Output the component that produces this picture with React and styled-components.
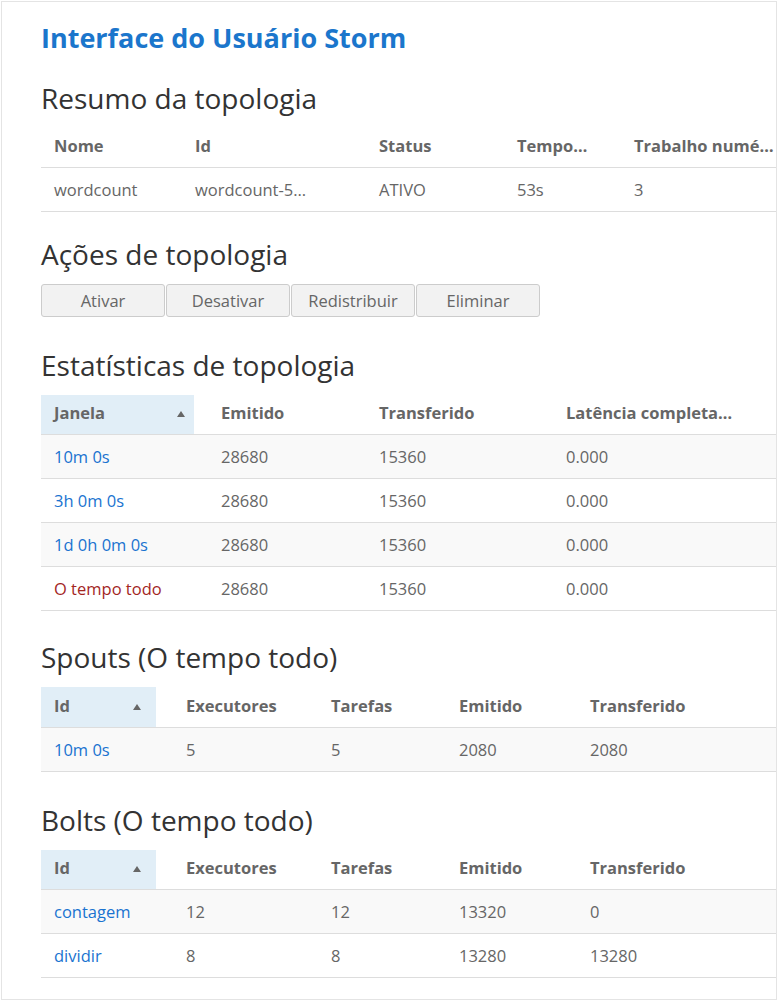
import React from "react";
import styled, { createGlobalStyle } from "styled-components";

const GlobalStyle = createGlobalStyle`
  body {
    margin: 0;
    background: #ffffff;
    font-family: "Open Sans", "Noto Sans", sans-serif;
  }
`;

const SUMMARY = {
  cols: [141, 184, 138, 117, null],
  head: ["Nome", "Id", "Status", "Tempo…", "Trabalho numé…"],
  rows: [["wordcount", "wordcount-5…", "ATIVO", "53s", "3"]],
};

const STATS = [
  { win: "10m 0s", emitted: "28680", transferred: "15360", latency: "0.000" },
  { win: "3h 0m 0s", emitted: "28680", transferred: "15360", latency: "0.000" },
  { win: "1d 0h 0m 0s", emitted: "28680", transferred: "15360", latency: "0.000" },
  { win: "O tempo todo", emitted: "28680", transferred: "15360", latency: "0.000", all: true },
];

const SPOUTS = [{ id: "10m 0s", executors: 5, tasks: 5, emitted: 2080, transferred: 2080 }];

const BOLTS = [
  { id: "contagem", executors: 12, tasks: 12, emitted: 13320, transferred: 0 },
  { id: "dividir", executors: 8, tasks: 8, emitted: 13280, transferred: 13280 },
];

const COMPONENT_COLS = [115, 145, 128, 131, null];

export default function App() {
  return (
    <>
      <GlobalStyle />
      <Frame>
        <Title>Interface do Usuário Storm</Title>

        <Heading $top={26} $bottom={13}>Resumo da topologia</Heading>
        <Table>
          <Cols widths={SUMMARY.cols} />
          <thead>
            <tr>
              {SUMMARY.head.map((h) => (
                <Th key={h}>{h}</Th>
              ))}
            </tr>
          </thead>
          <tbody>
            {SUMMARY.rows.map((row, i) => (
              <tr key={i}>
                {row.map((cell, j) => (
                  <Td key={j}>{cell}</Td>
                ))}
              </tr>
            ))}
          </tbody>
        </Table>

        <Heading $top={26}>Ações de topologia</Heading>
        <Actions>
          <ActionButton>Ativar</ActionButton>
          <ActionButton>Desativar</ActionButton>
          <ActionButton>Redistribuir</ActionButton>
          <ActionButton>Eliminar</ActionButton>
        </Actions>

        <Heading $top={32}>Estatísticas de topologia</Heading>
        <Table>
          <Cols widths={[153, 158, 187, null]} />
          <thead>
            <tr>
              <SortTh $arrowRight={9}>
                <SortLabel>
                  Janela
                  <Arrow />
                </SortLabel>
              </SortTh>
              <Th $pad={27}>Emitido</Th>
              <Th $pad={27}>Transferido</Th>
              <Th $pad={27}>Latência completa…</Th>
            </tr>
          </thead>
          <tbody>
            {STATS.map((s, i) => (
              <Row key={s.win} $striped={i % 2 === 0}>
                <Td>
                  <Link $all={s.all}>{s.win}</Link>
                </Td>
                <Td $pad={27}>{s.emitted}</Td>
                <Td $pad={27}>{s.transferred}</Td>
                <Td $pad={27}>{s.latency}</Td>
              </Row>
            ))}
          </tbody>
        </Table>

        <Heading $top={30}>Spouts (O tempo todo)</Heading>
        <ComponentTable rows={SPOUTS} />

        <Heading $top={32}>Bolts (O tempo todo)</Heading>
        <ComponentTable rows={BOLTS} />
      </Frame>
    </>
  );
}

function Cols({ widths }) {
  return (
    <colgroup>
      {widths.map((w, i) => (
        <col key={i} style={w ? { width: w } : undefined} />
      ))}
    </colgroup>
  );
}

function ComponentTable({ rows }) {
  return (
    <Table>
      <Cols widths={COMPONENT_COLS} />
      <thead>
        <tr>
          <SortTh $arrowRight={15}>
            <SortLabel>
              Id
              <Arrow />
            </SortLabel>
          </SortTh>
          <Th $pad={30}>Executores</Th>
          <Th $pad={30}>Tarefas</Th>
          <Th $pad={30}>Emitido</Th>
          <Th $pad={30}>Transferido</Th>
        </tr>
      </thead>
      <tbody>
        {rows.map((r, i) => (
          <Row key={r.id} $striped={i % 2 === 0}>
            <Td>
              <Link>{r.id}</Link>
            </Td>
            <Td $pad={30}>{r.executors}</Td>
            <Td $pad={30}>{r.tasks}</Td>
            <Td $pad={30}>{r.emitted}</Td>
            <Td $pad={30}>{r.transferred}</Td>
          </Row>
        ))}
      </tbody>
    </Table>
  );
}

const Frame = styled.div`
  box-sizing: border-box;
  width: 776px;
  height: 999px;
  margin: 1px;
  padding: 18px 0 0 39px;
  border: 1px solid #e4e4e4;
  overflow: hidden;
`;

const Title = styled.h1`
  margin: 0;
  font-size: 27px;
  line-height: 36px;
  font-weight: 700;
  color: #1b76cc;
`;

const Heading = styled.h2`
  margin: ${(p) => p.$top ?? 27}px 0 ${(p) => p.$bottom ?? 14}px;
  font-size: 28px;
  line-height: 32px;
  font-weight: 500;
  color: #333333;
`;

const Table = styled.table`
  width: 100%;
  table-layout: fixed;
  border-collapse: collapse;
  font-size: 16.5px;
`;

const Th = styled.th`
  box-sizing: border-box;
  height: 40px;
  padding: 0 6px 3px ${(p) => p.$pad ?? 13}px;
  text-align: left;
  font-weight: 700;
  color: #666666;
  white-space: nowrap;
  overflow: hidden;
  border-bottom: 1px solid #dddddd;
`;

const SortTh = styled(Th)`
  background: #e1eef7;
  padding-right: ${(p) => p.$arrowRight}px;
`;

const SortLabel = styled.span`
  display: flex;
  align-items: center;
  justify-content: space-between;
`;

const Arrow = styled.span`
  width: 0;
  height: 0;
  margin-top: 3px;
  border-left: 4.5px solid transparent;
  border-right: 4.5px solid transparent;
  border-bottom: 6px solid #666666;
`;

const Row = styled.tr`
  background: ${(p) => (p.$striped ? "#f9f9f9" : "#ffffff")};
`;

const Td = styled.td`
  box-sizing: border-box;
  height: 44px;
  padding: 0 6px 0 ${(p) => p.$pad ?? 13}px;
  color: #666666;
  white-space: nowrap;
  overflow: hidden;
  border-bottom: 1px solid #dddddd;
`;

const Link = styled.a`
  color: ${(p) => (p.$all ? "#a3261f" : "#1a73d0")};
  text-decoration: none;
  cursor: pointer;
`;

const Actions = styled.div`
  display: flex;
  gap: 1px;
`;

const ActionButton = styled.button`
  width: 124px;
  height: 33px;
  padding: 0;
  border: 1px solid #cccccc;
  border-radius: 3px;
  background: #f2f2f2;
  color: #666666;
  font-family: inherit;
  font-size: 16.5px;
`;
